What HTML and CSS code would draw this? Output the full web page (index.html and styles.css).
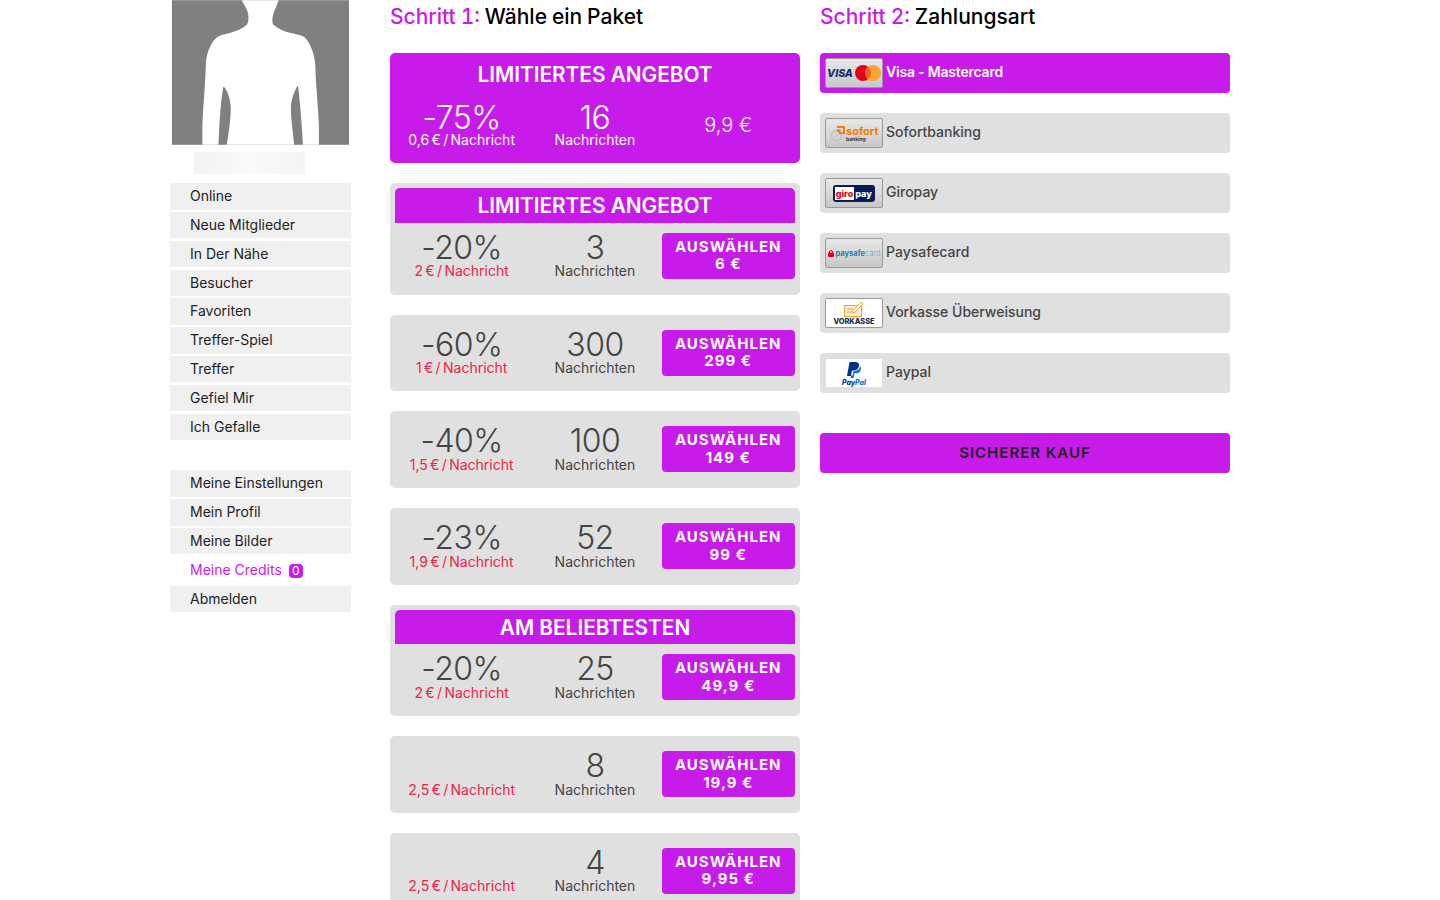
FILE: index.html
```html
<!DOCTYPE html>
<html lang="de">
<head>
	<meta charset="UTF-8">
	<title>Credits</title>
	<link rel="stylesheet" href="styles.css">
</head>
<body>
<div class="wrapper">
	<div class="sidebar">
		<svg class="photo" viewBox="36 0 530 433">
			<rect x="36" y="0" width="530" height="433" fill="#808080"/>
			<path fill="#fff" d="M245 0 C252 15 265 30 265 50 C265 62 264 70 258 75 C240 90 215 97 190 103 C170 108 160 120 152 136 C142 155 137 175 137 200 C136 250 128 330 127 380 L127 433 L175 433 C178 380 180 310 190 258 C200 268 210 290 212 320 C212 360 205 400 200 433 L402 433 C398 395 392 360 392 320 C393 295 405 268 413 255 C420 310 425 380 428 433 L476 433 L476 380 C474 320 466 250 465 190 C462 160 450 130 436 114 C425 104 405 102 385 97 C365 90 345 80 338 72 C335 60 337 48 340 38 C345 25 352 12 355 0 Z"/>
		</svg>
		<div class="nameBlur"></div>
		<ul class="menu">
			<li>Online</li>
			<li>Neue Mitglieder</li>
			<li>In Der Nähe</li>
			<li>Besucher</li>
			<li>Favoriten</li>
			<li>Treffer-Spiel</li>
			<li>Treffer</li>
			<li>Gefiel Mir</li>
			<li>Ich Gefalle</li>
		</ul>
		<ul class="menu">
			<li>Meine Einstellungen</li>
			<li>Mein Profil</li>
			<li>Meine Bilder</li>
			<li class="current">Meine Credits <span class="badge">0</span></li>
			<li>Abmelden</li>
		</ul>
	</div>

	<div class="column">
		<h2><span>Schritt 1:</span> Wähle ein Paket</h2>

		<div class="card selected">
			<div class="cardTitle">LIMITIERTES ANGEBOT</div>
			<div class="cardRow">
				<div class="cell"><div class="big">-75%</div><div class="small">0,6 € / Nachricht</div></div>
				<div class="cell"><div class="big">16</div><div class="small">Nachrichten</div></div>
				<div class="cell"><div class="price">9,9 €</div></div>
			</div>
		</div>

		<div class="card">
			<div class="ribbon">LIMITIERTES ANGEBOT</div>
			<div class="cardRow">
				<div class="cell"><div class="big">-20%</div><div class="small red">2 € / Nachricht</div></div>
				<div class="cell"><div class="big">3</div><div class="small">Nachrichten</div></div>
				<div class="cell"><div class="pick">AUSWÄHLEN<br>6 €</div></div>
			</div>
		</div>

		<div class="card">
			<div class="cardRow">
				<div class="cell"><div class="big">-60%</div><div class="small red">1 € / Nachricht</div></div>
				<div class="cell"><div class="big">300</div><div class="small">Nachrichten</div></div>
				<div class="cell"><div class="pick">AUSWÄHLEN<br>299 €</div></div>
			</div>
		</div>

		<div class="card">
			<div class="cardRow">
				<div class="cell"><div class="big">-40%</div><div class="small red">1,5 € / Nachricht</div></div>
				<div class="cell"><div class="big">100</div><div class="small">Nachrichten</div></div>
				<div class="cell"><div class="pick">AUSWÄHLEN<br>149 €</div></div>
			</div>
		</div>

		<div class="card">
			<div class="cardRow">
				<div class="cell"><div class="big">-23%</div><div class="small red">1,9 € / Nachricht</div></div>
				<div class="cell"><div class="big">52</div><div class="small">Nachrichten</div></div>
				<div class="cell"><div class="pick">AUSWÄHLEN<br>99 €</div></div>
			</div>
		</div>

		<div class="card">
			<div class="ribbon">AM BELIEBTESTEN</div>
			<div class="cardRow">
				<div class="cell"><div class="big">-20%</div><div class="small red">2 € / Nachricht</div></div>
				<div class="cell"><div class="big">25</div><div class="small">Nachrichten</div></div>
				<div class="cell"><div class="pick">AUSWÄHLEN<br>49,9 €</div></div>
			</div>
		</div>

		<div class="card">
			<div class="cardRow">
				<div class="cell"><div class="big">&nbsp;</div><div class="small red">2,5 € / Nachricht</div></div>
				<div class="cell"><div class="big">8</div><div class="small">Nachrichten</div></div>
				<div class="cell"><div class="pick">AUSWÄHLEN<br>19,9 €</div></div>
			</div>
		</div>

		<div class="card">
			<div class="cardRow">
				<div class="cell"><div class="big">&nbsp;</div><div class="small red">2,5 € / Nachricht</div></div>
				<div class="cell"><div class="big">4</div><div class="small">Nachrichten</div></div>
				<div class="cell"><div class="pick">AUSWÄHLEN<br>9,95 €</div></div>
			</div>
		</div>
	</div>

	<div class="column">
		<h2><span>Schritt 2:</span> Zahlungsart</h2>

		<div class="pay active">
			<div class="logo">
				<span class="visa">VISA</span>
				<svg class="mc" viewBox="0 0 26 16"><circle cx="8" cy="8" r="8" fill="#e2001a"/><circle cx="18" cy="8" r="8" fill="#f9a533"/><path d="M13 1.800a8 8 0 0 1 0 12.400a8 8 0 0 1 0-12.400z" fill="#f26122"/></svg>
			</div>
			<span class="payName">Visa - Mastercard</span>
		</div>
		<div class="pay">
			<div class="logo logoSofort">
				<svg class="sofortMark" viewBox="0 0 16 16"><circle cx="6.500" cy="9.500" r="5" fill="none" stroke="#c4c4c4" stroke-width="2"/><circle cx="6.500" cy="9.500" r="1.500" fill="#c8c8c8"/><path d="M7 0h8v8H8.500V6.200H13V2H7z" fill="#ee7f00"/><rect x="7" y="3.500" width="3.500" height="2.500" fill="#ee7f00"/></svg>
				<div class="sofort">sofort<small>banking</small></div>
			</div>
			<span class="payName">Sofortbanking</span>
		</div>
		<div class="pay">
			<div class="logo">
				<div class="giro"><span class="giroL">giro</span><span class="giroR">pay</span></div>
			</div>
			<span class="payName">Giropay</span>
		</div>
		<div class="pay">
			<div class="logo">
				<svg class="lock" viewBox="0 0 6 7"><path d="M1.500 3V2a1.500 1.500 0 0 1 3 0v1" fill="none" stroke="#e2001a"/><rect y="2.600" width="6" height="4.400" rx="1" fill="#e2001a"/></svg>
				<span class="safe">paysafe<i>card</i></span>
			</div>
			<span class="payName">Paysafecard</span>
		</div>
		<div class="pay">
			<div class="logo white stack">
				<svg class="check" viewBox="0 0 20 16"><rect x="0.500" y="4.500" width="17" height="11" fill="#fdf0d8" stroke="#f0a030"/><path d="M3 8h6M3 11h8" stroke="#f0a030"/><path d="M8 11l9-10 2 2-9 9z" fill="#fff" stroke="#f0a030"/></svg>
				<span class="vork">VORKASSE</span>
			</div>
			<span class="payName">Vorkasse Überweisung</span>
		</div>
		<div class="pay">
			<div class="logo white stack noborder">
				<svg class="pp" viewBox="0 0 14 16"><path d="M2.500 0h5.500c3 0 4.500 1.600 4 4-.6 3-2.800 4.500-5.500 4.500H5L4 14H0z" fill="#003087"/><path d="M12.500 3.500c1.200.8 1.700 2.200 1.300 3.900-.6 2.600-2.700 3.900-5 3.900H7.400L6.700 16H3.600l.5-2.500h1.500l1-4.500h1c3 0 5.100-1.800 5.400-4.400z" fill="#0070e0"/></svg>
				<span class="ppText">Pay<i>Pal</i></span>
			</div>
			<span class="payName">Paypal</span>
		</div>

		<div class="buy">SICHERER KAUF</div>
	</div>
</div>
</body>
</html>
```

FILE: styles.css
```css
* {
	padding: 0;
	margin: 0;
	list-style: none;
	box-sizing: border-box;
}
html, body {
	height: 900px;
	overflow: hidden;
}
body {
	background: #fff;
	font-family: "Inter", "Liberation Sans", sans-serif;
	color: #444;
}
.wrapper {
	display: flex;
	align-items: flex-start;
	padding-left: 170px;
}

/* sidebar */
.sidebar {
	width: 181px;
	margin-right: 39px;
}
.photo {
	display: block;
	width: 177px;
	height: 145px;
	margin-left: 2px;
}
.nameBlur {
	width: 111px;
	height: 22px;
	margin: 7px 0 9.300px 24px;
	background: linear-gradient(90deg, #f2f2f2, #fafafa 50%, #f4f4f4);
}
.menu {
	margin-bottom: 30.500px;
}
.menu li {
	height: 26.400px;
	line-height: 26.400px;
	margin-bottom: 2.400px;
	padding-left: 20px;
	background: #f0f0f0;
	font-size: 14px;
	color: #222;
}
.menu li.current {
	background: none;
	color: #c71bea;
}
.badge {
	display: inline-block;
	height: 14px;
	width: 14px;
	margin-left: 3px;
	line-height: 14px;
	border-radius: 4px;
	background: #c71bea;
	color: #fff;
	font-size: 12px;
	text-align: center;
}

/* columns */
.column {
	width: 410px;
	margin-right: 20px;
}
h2 {
	height: 53px;
	padding-top: 2.500px;
	font-size: 21px;
	line-height: 28px;
	font-weight: 500;
	color: #000;
	font-variant-numeric: tabular-nums;
	word-spacing: -0.700px;
}
h2 span {
	color: #c71bea;
}

/* packages */
.card {
	margin-bottom: 20px;
	padding: 5px 5px 0;
	border-radius: 5px;
	background: #e0e0e0;
}
.card.selected {
	background: #c71bea;
	color: #fff;
	height: 110.400px;
}
.cardTitle, .ribbon {
	text-align: center;
	font-size: 20.800px;
	font-weight: 600;
	color: #fff;
}
.cardTitle {
	line-height: 34px;
	margin-bottom: 3px;
}
.ribbon {
	height: 34.400px;
	padding-top: 1px;
	line-height: 33.400px;
	border-radius: 5px 5px 0 0;
	background: #c71bea;
}
.cardRow {
	display: flex;
	height: 71.800px;
}
.cell {
	width: 133.300px;
	text-align: center;
}
.big {
	margin-top: 8px;
	height: 32.400px;
	font-size: 32px;
	line-height: 34px;
	font-weight: 300;
	letter-spacing: -0.500px;
}
.selected .big {
	margin-top: 6px;
	height: 31px;
}
.small {
	font-size: 14px;
	line-height: 16px;
	word-spacing: -1.600px;
}
.red {
	color: #e8254a;
}
.selected .small {
	color: #fff;
}
.price {
	margin-top: 16px;
	font-size: 20px;
	line-height: 28px;
	font-weight: 300;
}
.pick {
	height: 46px;
	margin-top: 10px;
	padding-top: 5px;
	border-radius: 4px;
	background: #c71bea;
	color: #fff;
	font-size: 15px;
	line-height: 17.500px;
	font-weight: 700;
	letter-spacing: 1px;
}

/* payment */
.pay {
	display: flex;
	align-items: center;
	gap: 3px;
	height: 40px;
	margin-bottom: 20px;
	padding-left: 5px;
	border-radius: 4px;
	background: #e0e0e0;
	font-size: 14px;
	font-weight: 500;
}
.payName {
	margin-bottom: 3px;
}
.pay.active {
	background: #c71bea;
	color: #fff;
	font-weight: 600;
	letter-spacing: -0.200px;
}
.logo {
	display: flex;
	align-items: center;
	justify-content: center;
	gap: 2px;
	width: 58px;
	height: 30px;
	border: 1px solid #999;
	border-radius: 2px;
	background: linear-gradient(#e8e8e8, #c8c8c8);
	overflow: hidden;
	flex-shrink: 0;
	letter-spacing: 0;
}
.logo.white {
	background: #fff;
}
.logo.stack {
	flex-direction: column;
	gap: 0;
}
.logo.noborder {
	border-color: #e0e0e0;
}
.logo.logoSofort {
	justify-content: flex-start;
	gap: 0;
	padding-left: 4px;
}
.visa {
	font-size: 10.500px;
	font-weight: 800;
	font-style: italic;
	color: #1a2a6c;
}
.mc {
	width: 26px;
	height: 16px;
}
.sofortMark {
	width: 16px;
	height: 16px;
	flex-shrink: 0;
	margin-top: 1px;
}
.sofort {
	font-size: 11px;
	line-height: 11px;
	font-weight: 700;
	color: #ee7f00;
	margin-top: 1px;
}
.sofort small {
	display: block;
	font-size: 5px;
	line-height: 5px;
	color: #333;
}
.giro {
	display: flex;
	height: 17px;
	width: 42px;
	padding: 2px;
	border-radius: 3px;
	background: #0a1a5c;
	font-size: 9px;
	line-height: 13px;
	font-weight: 800;
	text-align: center;
}
.giroL {
	flex: 1;
	background: #fff;
	color: #e2001a;
}
.giroR {
	flex: 1;
	color: #fff;
}
.lock {
	width: 6px;
	height: 7px;
	flex-shrink: 0;
}
.safe {
	font-size: 7.500px;
	font-weight: 700;
	color: #1a7fb4;
}
.safe i {
	font-style: normal;
	font-weight: 300;
	color: #5aa8d0;
}
.check {
	width: 20px;
	height: 16px;
	margin-top: 1px;
}
.vork {
	font-size: 7.400px;
	line-height: 10px;
	font-weight: 800;
	color: #1a2a4c;
}
.pp {
	width: 14px;
	height: 16px;
	margin-top: 2px;
}
.ppText {
	font-size: 7px;
	line-height: 9px;
	font-weight: 800;
	font-style: italic;
	color: #003087;
}
.ppText i {
	color: #0070e0;
}
.buy {
	height: 40px;
	margin-top: 40px;
	border-radius: 4px;
	background: #c71bea;
	color: #222;
	text-align: center;
	font-size: 15px;
	line-height: 39px;
	font-weight: 600;
	letter-spacing: 1px;
}
```
